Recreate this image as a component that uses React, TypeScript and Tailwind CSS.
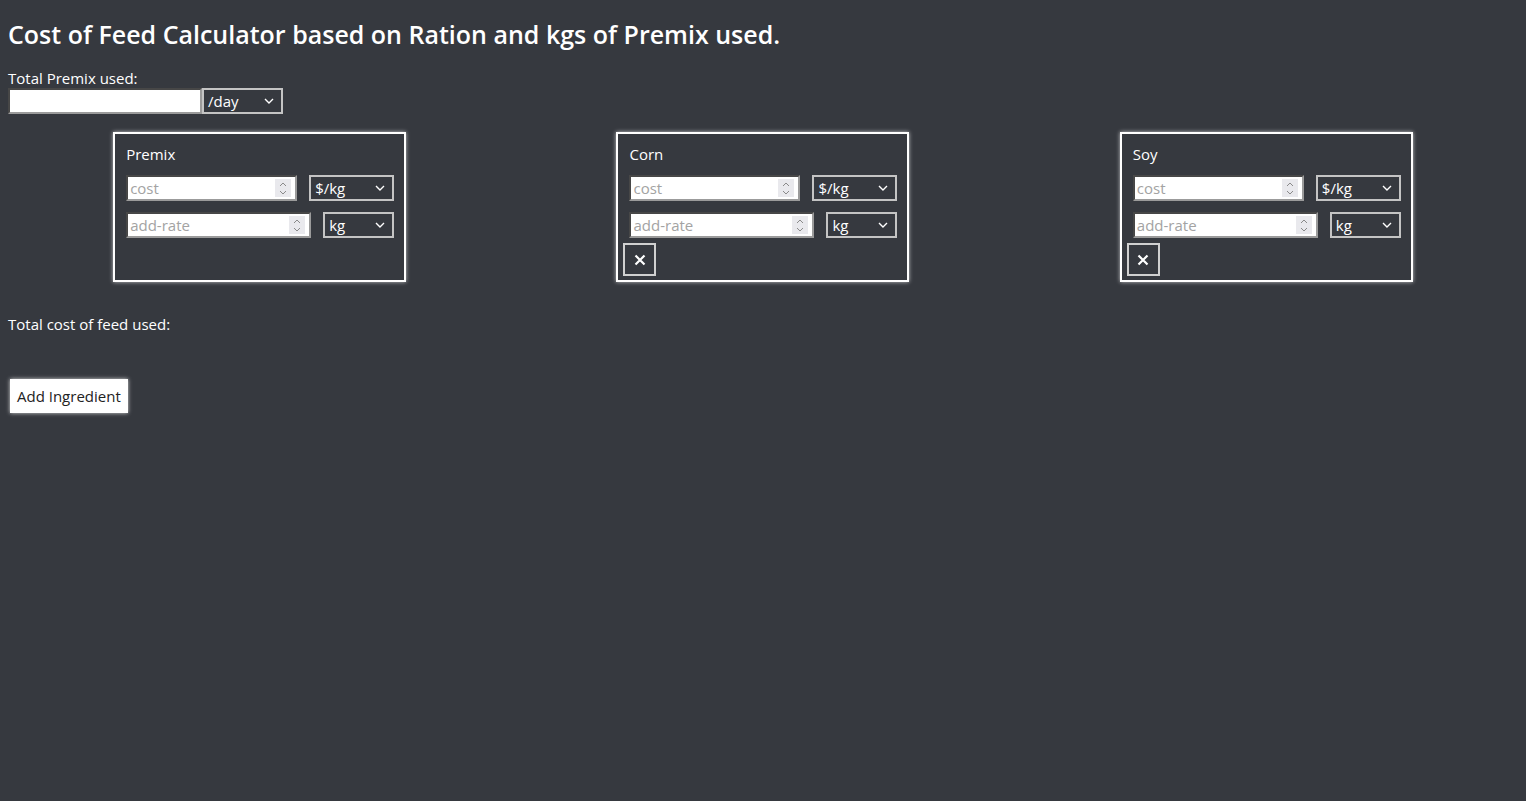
import { useState } from 'react';

type Ingredient = { id: number; name: string; removable: boolean };

const INITIAL: Ingredient[] = [
  { id: 1, name: 'Premix', removable: false },
  { id: 2, name: 'Corn', removable: true },
  { id: 3, name: 'Soy', removable: true },
];

function Chevron() {
  return (
    <svg width="10" height="6" viewBox="0 0 10 6" className="shrink-0">
      <path d="M1 1l4 4 4-4" fill="none" stroke="#fff" strokeWidth="1.4" />
    </svg>
  );
}

function Select({ value, width }: { value: string; width: string }) {
  return (
    <div
      className={`${width} h-[26px] flex items-center justify-between pl-[4px] pr-[7px] border-2 border-[#c4c4c4] text-white text-[15px] leading-none`}
    >
      <span>{value}</span>
      <Chevron />
    </div>
  );
}

function NumberInput({ placeholder, width }: { placeholder: string; width: string }) {
  return (
    <div
      className={`${width} h-[26px] flex items-center bg-white border-2 [border-style:inset] border-[#9b9b9b] pr-[4px]`}
    >
      <input
        type="text"
        placeholder={placeholder}
        className="flex-1 min-w-0 h-full px-[2px] text-[15px] text-black placeholder:text-[#a3a3a3] outline-none bg-transparent"
      />
      <span className="w-[16px] h-[18px] bg-[#e9e9ed] flex flex-col items-center justify-center gap-[3px]">
        <svg width="8" height="5" viewBox="0 0 8 5">
          <path d="M1 4l3-3 3 3" fill="none" stroke="#8a8a8a" strokeWidth="1" />
        </svg>
        <svg width="8" height="5" viewBox="0 0 8 5">
          <path d="M1 1l3 3 3-3" fill="none" stroke="#8a8a8a" strokeWidth="1" />
        </svg>
      </span>
    </div>
  );
}

function IngredientCard({ item, onRemove }: { item: Ingredient; onRemove: () => void }) {
  return (
    <div className="w-[293px] border-2 border-white shadow-[0_0_4px_rgba(255,255,255,0.7)] p-[4px] flex flex-col">
      <div className="pl-[7px] pt-[6px] h-[26px] text-[15px] leading-[20px] text-white">{item.name}</div>
      <div className="pl-[7px] pr-[6px] mt-[11px] flex flex-col gap-[11px]">
        <div className="flex justify-between">
          <NumberInput placeholder="cost" width="w-[171px]" />
          <Select value="$/kg" width="w-[85px]" />
        </div>
        <div className="flex justify-between">
          <NumberInput placeholder="add-rate" width="w-[185px]" />
          <Select value="kg" width="w-[71px]" />
        </div>
      </div>
      {item.removable && (
        <button
          onClick={onRemove}
          className="mt-[5px] ml-[1px] w-[33px] h-[33px] border-2 border-[#d0d0d0] flex items-center justify-center text-white"
        >
          <svg width="12" height="12" viewBox="0 0 12 12">
            <path d="M1.5 1.5l9 9M10.5 1.5l-9 9" stroke="#fff" strokeWidth="2.2" />
          </svg>
        </button>
      )}
    </div>
  );
}

export default function App() {
  const [items, setItems] = useState<Ingredient[]>(INITIAL);

  return (
    <div className="min-h-screen bg-[#36393f] text-white px-2 font-['Open_Sans',sans-serif]">
      <h1 className="pt-[16px] text-[25px] leading-[36px] font-semibold">
        Cost of Feed Calculator based on Ration and kgs of Premix used.
      </h1>
      <div className="mt-[16px] text-[15px] leading-[20px]">Total Premix used:</div>
      <div className="flex">
        <input
          type="text"
          className="w-[194px] h-[26px] bg-white border-2 [border-style:inset] border-[#9b9b9b] text-black text-[15px] outline-none"
        />
        <Select value="/day" width="w-[81px]" />
      </div>

      <div className="mt-[18px] flex justify-around">
        {items.map((item) => (
          <IngredientCard
            key={item.id}
            item={item}
            onRemove={() => setItems(items.filter((i) => i.id !== item.id))}
          />
        ))}
      </div>

      <div className="mt-[32px] text-[15px] leading-[20px]">Total cost of feed used:</div>

      <button
        onClick={() =>
          setItems([...items, { id: Date.now(), name: 'Ingredient', removable: true }])
        }
        className="mt-[45px] ml-[2px] h-[34px] px-[7px] bg-white text-[#222] text-[15px] shadow-[0_0_4px_rgba(255,255,255,0.8)]"
      >
        Add Ingredient
      </button>
    </div>
  );
}
